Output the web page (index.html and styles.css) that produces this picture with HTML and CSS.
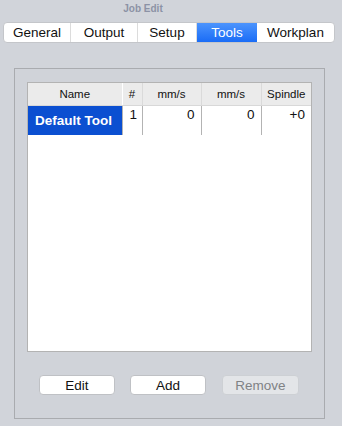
FILE: index.html
```html
<!DOCTYPE html>
<html lang="en">
<head>
    <meta charset="UTF-8">
    <title>Job Edit</title>
    <link rel="stylesheet" href="styles.css">
</head>
<body>
    <div class="title">Job Edit</div>

    <nav class="tabs">
        <div class="tab">General</div>
        <div class="tab">Output</div>
        <div class="tab">Setup</div>
        <div class="tab active">Tools</div>
        <div class="tab">Workplan</div>
    </nav>

    <main class="panel">
        <div class="table-box">
            <table class="tools">
                <colgroup>
                    <col class="c-name">
                    <col class="c-num">
                    <col class="c-speed">
                    <col class="c-speed2">
                    <col class="c-spindle">
                </colgroup>
                <thead>
                    <tr>
                        <th>Name</th>
                        <th>#</th>
                        <th>mm/s</th>
                        <th>mm/s</th>
                        <th>Spindle</th>
                    </tr>
                </thead>
                <tbody>
                    <tr>
                        <td class="selected">Default Tool</td>
                        <td class="num left">1</td>
                        <td class="num">0</td>
                        <td class="num">0</td>
                        <td class="num">+0</td>
                    </tr>
                </tbody>
            </table>
        </div>

        <div class="buttons">
            <button class="btn">Edit</button>
            <button class="btn">Add</button>
            <button class="btn disabled">Remove</button>
        </div>
    </main>
</body>
</html>
```

FILE: styles.css
```css
:root {
    --bg: #d1d4da;
    --border: #b3b3b3;
    --blue: #0b4fd1;
    --text: #111111;
}

* {
    margin: 0;
    padding: 0;
    box-sizing: border-box;
}

body {
    font-family: 'Liberation Sans', Arial, sans-serif;
    background: var(--bg);
    color: var(--text);
    width: 342px;
    height: 426px;
    overflow: hidden;
}

.title {
    height: 22px;
    padding: 3px 0 0 0;
    width: 286px;
    text-align: center;
    font-size: 10px;
    font-weight: 700;
    color: #8c92a5;
}

.tabs {
    display: flex;
    margin-left: 3px;
    width: 332px;
    height: 21px;
    background: #ffffff;
    border: 1px solid #c4c6ca;
    border-radius: 4px;
    overflow: hidden;
}

.tab {
    display: flex;
    align-items: center;
    justify-content: center;
    font-size: 13.5px;
    border-right: 1px solid #dcdcdc;
}

.tab:nth-child(1) { width: 67px; }
.tab:nth-child(2) { width: 67px; }
.tab:nth-child(3) { width: 59px; }
.tab:nth-child(4) { width: 60px; }
.tab:nth-child(5) { flex: 1; border-right: none; }

.tab.active {
    background: linear-gradient(#4c94fd, #1a6cf6);
    color: #ffffff;
    border-right: none;
}

.panel {
    margin: 25px 0 0 14px;
    width: 311px;
    height: 351px;
    border: 1px solid #a9abaf;
    background: #d0d3d9;
    padding: 13px 0 0 12px;
}

.table-box {
    width: 285px;
    height: 270px;
    background: #ffffff;
    border: 1px solid var(--border);
}

.tools {
    border-collapse: collapse;
    table-layout: fixed;
    width: 283px;
}

.c-name { width: 94px; }
.c-num { width: 20px; }
.c-speed { width: 59px; }
.c-speed2 { width: 60px; }
.c-spindle { width: 50px; }

.tools th {
    height: 22px;
    background: #ebebeb;
    font-size: 11.5px;
    font-weight: 400;
    text-align: center;
    border-right: 1px solid #dadada;
    border-bottom: 1px solid #d8d8d8;
}

.tools th:first-child {
    border-right: 1px solid #ffffff;
}

.tools th:last-child {
    border-right: none;
}

.tools td {
    height: 30px;
    font-size: 13.5px;
    border-right: 1px solid var(--border);
}

.tools td:last-child {
    border-right: none;
}

.selected {
    background: var(--blue);
    color: #ffffff;
    font-weight: 700;
    padding: 1px 0 0 7px;
    vertical-align: middle;
}

.num {
    vertical-align: top;
    text-align: right;
    padding: 1px 6px 0 0;
}

.num.left {
    text-align: left;
    padding-left: 7px;
}

.buttons {
    display: flex;
    gap: 15px;
    margin: 23px 0 0 12px;
}

.btn {
    width: 76px;
    height: 20px;
    font-family: 'Liberation Sans', Arial, sans-serif;
    font-size: 13.5px;
    color: var(--text);
    background: #ffffff;
    border: 1px solid #bfc1c5;
    border-radius: 4px;
}

.btn:nth-child(2) {
    margin-right: 1px;
}

.btn.disabled {
    width: 77px;
    background: #e3e5e8;
    color: #808285;
    border-color: #cdd0d4;
}
```
